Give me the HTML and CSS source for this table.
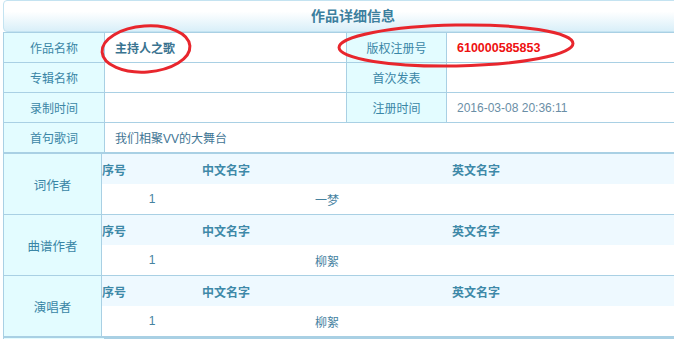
FILE: index.html
```html
<!DOCTYPE html>
<html lang="zh-CN">
<head>
<meta charset="utf-8">
<title>作品详细信息</title>
<link rel="stylesheet" href="styles.css">
</head>
<body>
<div class="page">
  <div class="title">作品详细信息</div>
  <div class="info">
    <div class="label">作品名称</div>
    <div class="value strong">主持人之歌</div>
    <div class="label">版权注册号</div>
    <div class="value red">610000585853</div>

    <div class="label">专辑名称</div>
    <div class="value"></div>
    <div class="label">首次发表</div>
    <div class="value"></div>

    <div class="label">录制时间</div>
    <div class="value"></div>
    <div class="label">注册时间</div>
    <div class="value date">2016-03-08 20:36:11</div>

    <div class="label">首句歌词</div>
    <div class="value wide">我们相聚VV的大舞台</div>
  </div>

  <div class="people">
    <div class="role-label">词作者</div>
    <div class="role-body">
      <div class="h">序号</div><div class="h">中文名字</div><div class="h">英文名字</div>
      <div class="d">1</div><div class="d">一梦</div><div class="d"></div>
    </div>

    <div class="role-label">曲谱作者</div>
    <div class="role-body">
      <div class="h">序号</div><div class="h">中文名字</div><div class="h">英文名字</div>
      <div class="d">1</div><div class="d">柳絮</div><div class="d"></div>
    </div>

    <div class="role-label">演唱者</div>
    <div class="role-body">
      <div class="h">序号</div><div class="h">中文名字</div><div class="h">英文名字</div>
      <div class="d">1</div><div class="d">柳絮</div><div class="d"></div>
    </div>
  </div>

  <div class="info next">
    <div class="label"></div>
    <div class="value wide"></div>
  </div>

  <svg class="marks" width="674" height="339" viewBox="0 0 674 339" aria-hidden="true">
    <ellipse cx="146" cy="49" rx="44" ry="23" transform="rotate(-4 146 49)" />
    <ellipse cx="456" cy="45.5" rx="117" ry="20.5" transform="rotate(-1 456 45.5)" />
  </svg>
</div>
</body>
</html>
```

FILE: styles.css
```css
html, body {
  margin: 0;
  padding: 0;
  background: #ffffff;
  overflow: hidden;
}

body {
  font-family: "Liberation Sans", "Noto Sans CJK SC", sans-serif;
  font-size: 12px;
  color: #3a86a6;
}

.page {
  width: 700px;
  margin-left: 3px;
}

.title {
  height: 30px;
  border: 1px solid #c4e3f1;
  border-radius: 4px;
  background: linear-gradient(#ffffff 0%, #ffffff 35%, #d9eff9 100%);
  text-align: center;
  line-height: 30px;
  font-size: 14px;
  font-weight: bold;
  color: #3d7f9e;
}

.info {
  display: grid;
  grid-template-columns: 100px 241px 99px 1fr;
  grid-auto-rows: 29px;
  gap: 1px;
  background: #a9d0e4;
  border: 1px solid #a9d0e4;
}

.info > div {
  background: #ffffff;
  display: flex;
  align-items: center;
}

.info > .label {
  justify-content: center;
  background: #e3fcff;
  color: #3a86a6;
}

.value {
  padding-left: 10px;
  color: #3f7594;
}

.value.wide {
  grid-column: span 3;
}

.value.strong {
  font-weight: bold;
  color: #3a7390;
}

.value.red {
  font-weight: bold;
  color: #ee1111;
  font-size: 12.5px;
}

.value.date {
  color: #6a8ea6;
}

.people {
  display: grid;
  grid-template-columns: 97px 1fr;
  grid-auto-rows: 60px;
  gap: 1px;
  background: #a9d0e4;
  border: 1px solid #a9d0e4;
  border-bottom-width: 2px;
}

.role-label {
  background: #e3fcff;
  display: flex;
  align-items: center;
  justify-content: center;
  font-size: 12.5px;
  color: #3a86a6;
}

.role-body {
  background: #ffffff;
  display: grid;
  grid-template-columns: 100px 250px 1fr;
  grid-template-rows: 30px 30px;
}

.h {
  background: #eef9ff;
  font-weight: bold;
  display: flex;
  align-items: center;
  color: #3e89a8;
}

.d {
  display: flex;
  align-items: center;
  justify-content: center;
  color: #46829f;
}

.info.next {
  border-top: none;
  grid-template-columns: 100px 1fr;
}

.marks {
  position: absolute;
  left: 0;
  top: 0;
  pointer-events: none;
}

.marks ellipse {
  fill: none;
  stroke: #e8262d;
  stroke-width: 3;
}
```
